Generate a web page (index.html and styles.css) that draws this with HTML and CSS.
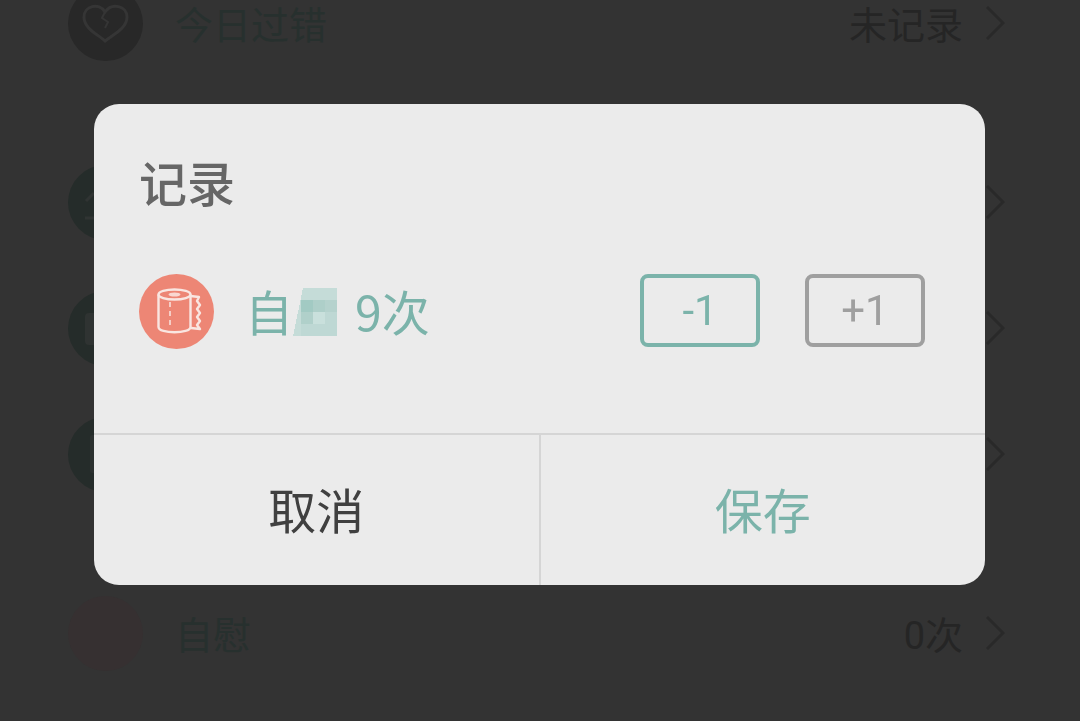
FILE: index.html
```html
<!DOCTYPE html>
<html lang="zh-CN">

<head>
  <meta charset="UTF-8">
  <meta name="viewport" content="width=device-width, initial-scale=1.0">
  <title>记录</title>
  <link rel="stylesheet" href="styles.css">
</head>

<body>
  <main class="page">
    <section class="group">
      <a class="row" href="#">
        <svg class="row-icon" viewBox="0 0 75 75">
          <circle cx="37.5" cy="37.5" r="37.5" fill="#282828" />
          <path d="M37 55C31 49 16 43 16 31C16 20 31 16 37 26C44 16 59 20 59 31C59 43 44 49 37 55Z" fill="none" stroke="#353535" stroke-width="3" />
          <path d="M37 26L34 32L40 36L37 42" fill="none" stroke="#353535" stroke-width="2" />
        </svg>
        <span class="row-name">今日过错</span>
        <span class="row-value">未记录</span>
        <svg class="arrow" viewBox="0 0 20 36"><path d="M2 2L18 18L2 34" /></svg>
      </a>
    </section>
    <section class="group">
      <a class="row" href="#" aria-label="项目一">
        <svg class="row-icon" viewBox="0 0 75 75">
          <circle cx="37.5" cy="37.5" r="37.5" fill="#252c2a" />
          <path d="M18 36L26 28M17 53H58" fill="none" stroke="#303433" stroke-width="3" />
        </svg>
        <svg class="arrow" viewBox="0 0 20 36"><path d="M2 2L18 18L2 34" /></svg>
      </a>
      <a class="row" href="#" aria-label="项目二">
        <svg class="row-icon" viewBox="0 0 75 75">
          <circle cx="37.5" cy="37.5" r="37.5" fill="#252c2a" />
          <rect x="17" y="22" width="40" height="32" rx="4" fill="#2f3332" />
        </svg>
        <svg class="arrow" viewBox="0 0 20 36"><path d="M2 2L18 18L2 34" /></svg>
      </a>
      <a class="row" href="#" aria-label="项目三">
        <svg class="row-icon" viewBox="0 0 75 75">
          <circle cx="37.5" cy="37.5" r="37.5" fill="#252c2a" />
          <rect x="22" y="18" width="32" height="38" rx="2" fill="#2c3130" />
        </svg>
        <svg class="arrow" viewBox="0 0 20 36"><path d="M2 2L18 18L2 34" /></svg>
      </a>
    </section>
    <section class="group">
      <a class="row" href="#">
        <svg class="row-icon" viewBox="0 0 75 75">
          <circle cx="37.5" cy="37.5" r="37.5" fill="#363031" />
        </svg>
        <span class="row-name">自慰</span>
        <span class="row-value">0次</span>
        <svg class="arrow" viewBox="0 0 20 36"><path d="M2 2L18 18L2 34" /></svg>
      </a>
    </section>
  </main>

  <div class="overlay">
    <div class="dialog" role="dialog" aria-labelledby="dialog-title">
      <div class="dialog-body">
        <h1 id="dialog-title" class="dialog-title">记录</h1>
        <div class="counter">
          <svg class="counter-icon" viewBox="0 0 75 75">
            <circle cx="37.5" cy="37.5" r="37.5" fill="#ed8675" />
            <g fill="none" stroke="#f9e6e1" stroke-width="2.4" stroke-linejoin="round">
              <ellipse cx="35.5" cy="20.5" rx="16" ry="5" />
              <path d="M19.5 20.5V53C19.5 60 51.5 60 51.5 53V20.5" />
              <path d="M51.5 22L60 23L58 27L61 31L58 35L61 39L58 43L61 47L58 51L61 55L52 54" />
              <path d="M31 28V55" stroke-width="1.5" stroke-dasharray="5 4" />
            </g>
            <ellipse cx="35.5" cy="20.5" rx="6" ry="2" fill="#f9d8d1" />
          </svg>
          <div class="counter-label">
            <span>自</span>
            <svg class="mosaic" viewBox="0 0 44 48" shape-rendering="crispEdges">
              <path d="M10 0H44V48H0Q5 24 10 0Z" fill="#c5dcd8" />
              <path d="M8 12H20V24H8Z" fill="#a2cac3" />
              <path d="M20 12H32V24H20Z" fill="#aecfc9" />
              <path d="M32 12H44V24H32Z" fill="#b5d2cd" />
              <path d="M8 24H20V36H8Z" fill="#b0d0ca" />
              <path d="M20 24H32V36H20Z" fill="#c9e0dc" />
              <path d="M32 24H44V36H32Z" fill="#bed8d4" />
              <path d="M8 36H44V48H8Z" fill="#bed8d4" />
            </svg>
            <span class="counter-value">9次</span>
          </div>
          <button class="step step-minus" type="button">-1</button>
          <button class="step step-plus" type="button">+1</button>
        </div>
      </div>
      <div class="dialog-actions">
        <button class="action action-cancel" type="button">取消</button>
        <button class="action action-save" type="button">保存</button>
      </div>
    </div>
  </div>
</body>

</html>
```
FILE: styles.css
```css
* {
  box-sizing: border-box;
}

body {
  margin: 0;
  min-height: 100vh;
  overflow: hidden;
  font-family: Roboto, "Noto Sans CJK SC", sans-serif;
  background-color: #333;
}

button {
  margin: 0;
  padding: 0;
  border: 0;
  background: none;
  font-family: inherit;
  cursor: pointer;
}

/* list behind the dialog, scrolled part way through its first row */
.page {
  margin-top: -40px;
  padding: 0 75px 0 68px;
}

.group {
  margin-bottom: 53px;
}

.row {
  display: flex;
  align-items: center;
  height: 126px;
  text-decoration: none;
  font-size: 38px;
  line-height: 56px;
}

.row-icon {
  width: 75px;
  height: 75px;
}

.row-name,
.row-value {
  padding-top: 6px;
}

.row-name {
  margin-left: 32px;
  color: #27302e;
}

.row-value {
  margin-left: auto;
  color: #252525;
}

.arrow {
  width: 20px;
  height: 36px;
  margin-left: auto;
  fill: none;
  stroke: #292929;
  stroke-width: 3;
}

.row-value + .arrow {
  margin-left: 22px;
}

.overlay {
  position: fixed;
  inset: 0;
  display: flex;
  align-items: flex-start;
  padding: 104px 95px 0 94px;
}

.dialog {
  flex: 1;
  overflow: hidden;
  border-radius: 25px;
  background-color: #ebebeb;
}

.dialog-body {
  padding: 46px 60px 84px 45px;
}

.dialog-title {
  margin: 0 0 52px;
  font-size: 48px;
  font-weight: 500;
  line-height: 72px;
  color: #666;
}

.counter {
  display: flex;
  align-items: flex-start;
  gap: 45px;
}

.counter-icon {
  width: 75px;
  height: 75px;
  margin-right: -14px;
}

.counter-label {
  display: flex;
  flex: 1;
  font-family: "Noto Sans CJK SC", sans-serif;
  font-size: 48px;
  line-height: 72px;
  color: #7bb3aa;
}

.mosaic {
  width: 44px;
  height: 48px;
  margin-top: 14px;
}

.counter-value {
  margin-left: 18px;
}

.step {
  width: 120px;
  height: 73px;
  border: 4px solid;
  border-radius: 8px;
  font-size: 42px;
  line-height: 48px;
}

.step-minus {
  color: #7bb3aa;
}

.step-plus {
  color: #9f9f9f;
}

.dialog-actions {
  display: flex;
  border-top: 2px solid #d5d5d5;
}

.action {
  flex: 1;
  height: 150px;
  padding-top: 6px;
  font-size: 48px;
  line-height: 72px;
}

.action-cancel {
  border-right: 2px solid #d5d5d5;
  color: #404040;
}

.action-save {
  color: #7bb3aa;
}
```
